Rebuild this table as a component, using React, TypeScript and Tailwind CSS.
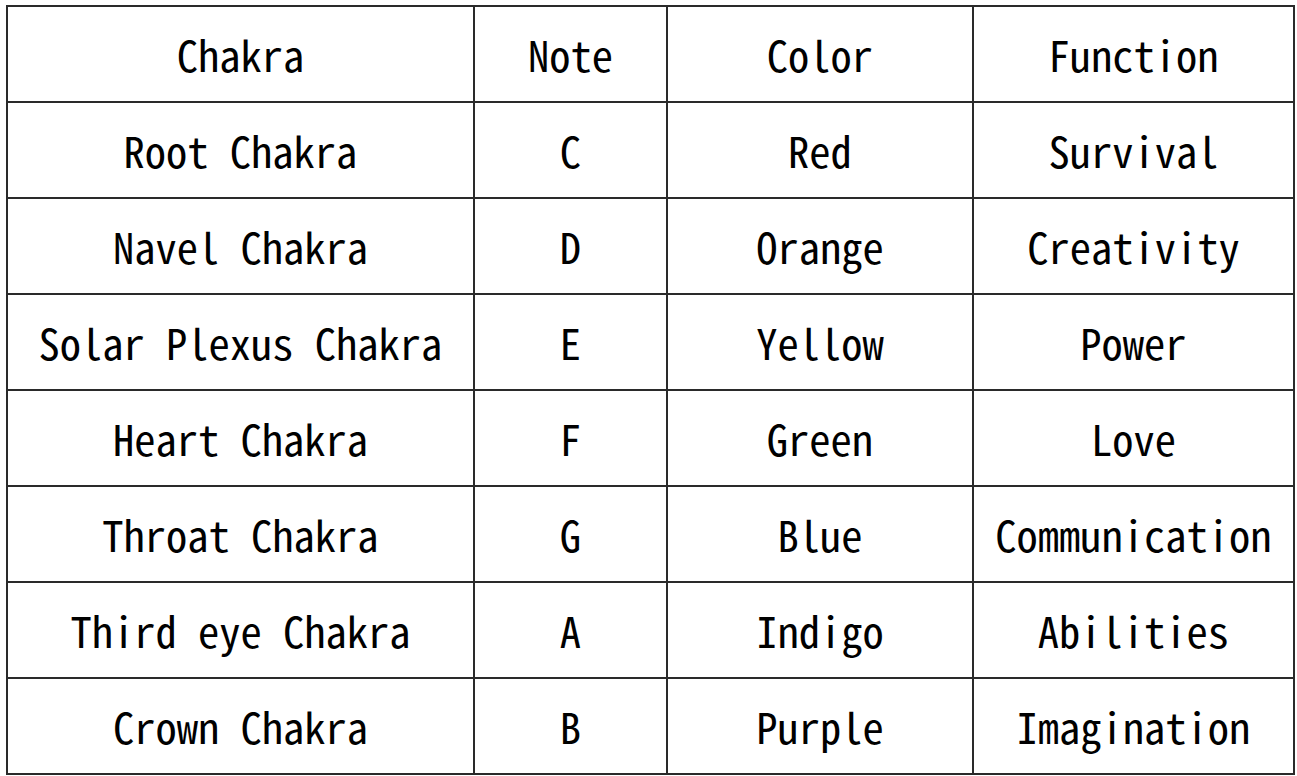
const rows = [
  ["Root Chakra", "C", "Red", "Survival"],
  ["Navel Chakra", "D", "Orange", "Creativity"],
  ["Solar Plexus Chakra", "E", "Yellow", "Power"],
  ["Heart Chakra", "F", "Green", "Love"],
  ["Throat Chakra", "G", "Blue", "Communication"],
  ["Third eye Chakra", "A", "Indigo", "Abilities"],
  ["Crown Chakra", "B", "Purple", "Imagination"],
];

const cell =
  "border-2 border-[#2a2a2a] text-center align-middle whitespace-nowrap p-0";

export default function App() {
  return (
    <div className="w-[1297px] h-[776px] bg-white pl-[6px] pt-[5px]">
      <table
        className="border-collapse table-fixed w-[1289px] h-[768px] text-black text-[42.5px] leading-none"
        style={{ fontFamily: '"Noto Sans Mono CJK SC", "Liberation Mono", monospace' }}
      >
        <colgroup>
          <col className="w-[467px]" />
          <col className="w-[193px]" />
          <col className="w-[306px]" />
          <col className="w-[321px]" />
        </colgroup>
        <thead>
          <tr className="h-[96px]">
            <th className={cell + " font-normal"}>Chakra</th>
            <th className={cell + " font-normal"}>Note</th>
            <th className={cell + " font-normal"}>Color</th>
            <th className={cell + " font-normal"}>Function</th>
          </tr>
        </thead>
        <tbody>
          {rows.map((r) => (
            <tr key={r[0]} className="h-[96px]">
              {r.map((t, i) => (
                <td key={i} className={cell}>
                  {t}
                </td>
              ))}
            </tr>
          ))}
        </tbody>
      </table>
    </div>
  );
}
